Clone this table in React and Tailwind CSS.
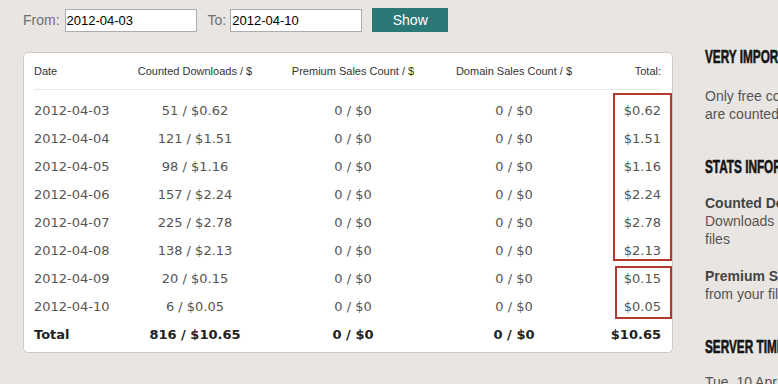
import React from "react";

const rows = [
  { date: "2012-04-03", counted: "51 / $0.62", premium: "0 / $0", domain: "0 / $0", total: "$0.62" },
  { date: "2012-04-04", counted: "121 / $1.51", premium: "0 / $0", domain: "0 / $0", total: "$1.51" },
  { date: "2012-04-05", counted: "98 / $1.16", premium: "0 / $0", domain: "0 / $0", total: "$1.16" },
  { date: "2012-04-06", counted: "157 / $2.24", premium: "0 / $0", domain: "0 / $0", total: "$2.24" },
  { date: "2012-04-07", counted: "225 / $2.78", premium: "0 / $0", domain: "0 / $0", total: "$2.78" },
  { date: "2012-04-08", counted: "138 / $2.13", premium: "0 / $0", domain: "0 / $0", total: "$2.13" },
  { date: "2012-04-09", counted: "20 / $0.15", premium: "0 / $0", domain: "0 / $0", total: "$0.15" },
  { date: "2012-04-10", counted: "6 / $0.05", premium: "0 / $0", domain: "0 / $0", total: "$0.05" },
];

const cols = "grid grid-cols-[96px_130px_186px_136px_79px]";

function Heading({ children, className = "" }) {
  return (
    <h3
      className={`h-[24px] leading-[24px] whitespace-nowrap text-[19px] font-bold text-[#161616] origin-left scale-x-[0.62] [-webkit-text-stroke:0.6px_#161616] ${className}`}
      style={{ fontFamily: "'Liberation Sans Narrow', 'Liberation Sans', sans-serif" }}
    >
      {children}
    </h3>
  );
}

export default function App() {
  return (
    <div
      className="w-[778px] h-[384px] overflow-hidden bg-[#e8e5e2] flex pl-[23px]"
      style={{ fontFamily: "'Liberation Sans', Arial, sans-serif" }}
    >
      {/* Stats column */}
      <div className="w-[650px] shrink-0 pt-[8px]">
        {/* Date range form */}
        <div className="flex items-center h-[24px] text-[14px] text-[#707070]">
          <span className="mr-[5px]">From:</span>
          <input
            defaultValue="2012-04-03"
            className="w-[132px] h-[23px] border border-[#adadad] bg-white px-[1px] text-[13px] text-black outline-none"
          />
          <span className="ml-[11px] mr-[4px]">To:</span>
          <input
            defaultValue="2012-04-10"
            className="w-[132px] h-[23px] border border-[#adadad] bg-white px-[1px] text-[13px] text-black outline-none"
          />
          <button className="ml-[10px] w-[76px] h-[24px] bg-[#2a7977] text-white text-[14px]">
            Show
          </button>
        </div>

        {/* Stats table */}
        <div className="relative mt-[20px] w-[650px] h-[301px] bg-white border border-[#cdcbc8] rounded-[5px] pl-[10px] pr-[11px]">
          <div className={`${cols} h-[37px] items-center text-[11px] text-[#333] border-b border-[#e6e6e6]`}>
            <span>Date</span>
            <span className="text-center">Counted Downloads / $</span>
            <span className="text-center">Premium Sales Count / $</span>
            <span className="text-center">Domain Sales Count / $</span>
            <span className="text-right">Total:</span>
          </div>
          <div
            className="pt-[7px] text-[13px] text-[#555]"
            style={{ fontFamily: "'DejaVu Sans', Verdana, sans-serif" }}
          >
            {rows.map((r) => (
              <div key={r.date} className={`${cols} h-[28px] items-center`}>
                <span>{r.date}</span>
                <span className="text-center">{r.counted}</span>
                <span className="text-center">{r.premium}</span>
                <span className="text-center">{r.domain}</span>
                <span className="text-right">{r.total}</span>
              </div>
            ))}
            <div className={`${cols} h-[28px] items-center font-bold text-[#222]`}>
              <span>Total</span>
              <span className="text-center">816 / $10.65</span>
              <span className="text-center">0 / $0</span>
              <span className="text-center">0 / $0</span>
              <span className="text-right">$10.65</span>
            </div>
          </div>

          {/* highlight boxes around totals */}
          <div className="absolute left-[589px] top-[40px] w-[59px] h-[168px] border-2 border-[#b03a2f]" />
          <div className="absolute left-[591px] top-[213px] w-[57px] h-[53px] border-2 border-[#b03a2f]" />
        </div>
      </div>

      {/* Sidebar */}
      <aside className="ml-[32px] w-[260px] shrink-0 pt-[45px] text-[14px] leading-[18px] text-[#555]">
        <Heading>VERY IMPORTANT!</Heading>
        <p className="mt-[18px] whitespace-nowrap">
          Only free completed downloads
          <br />
          are counted in statistics.
        </p>
        <Heading className="mt-[32px]">STATS INFORMATION</Heading>
        <div className="mt-[15px] whitespace-nowrap">
          <div className="font-bold text-[#444]">Counted Downloads</div>
          <div>Downloads counted from your</div>
          <div>files</div>
        </div>
        <div className="mt-[19px] whitespace-nowrap">
          <div className="font-bold text-[#444]">Premium Sales</div>
          <div>from your files by premium</div>
        </div>
        <Heading className="mt-[32px]">SERVER TIME</Heading>
        <div className="mt-[14px] whitespace-nowrap">Tue, 10 Apr 2012 12:00:00</div>
      </aside>
    </div>
  );
}
